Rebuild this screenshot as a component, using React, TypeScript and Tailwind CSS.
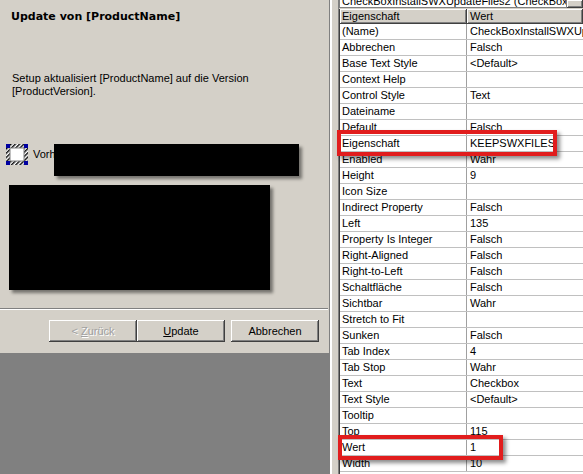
import React from 'react'

const rows: [string, string][] = [
  ['(Name)', 'CheckBoxInstallSWXUpdateFiles2'],
  ['Abbrechen', 'Falsch'],
  ['Base Text Style', '<Default>'],
  ['Context Help', ''],
  ['Control Style', 'Text'],
  ['Dateiname', ''],
  ['Default', 'Falsch'],
  ['Eigenschaft', 'KEEPSWXFILES'],
  ['Enabled', 'Wahr'],
  ['Height', '9'],
  ['Icon Size', ''],
  ['Indirect Property', 'Falsch'],
  ['Left', '135'],
  ['Property Is Integer', 'Falsch'],
  ['Right-Aligned', 'Falsch'],
  ['Right-to-Left', 'Falsch'],
  ['Schaltfläche', 'Falsch'],
  ['Sichtbar', 'Wahr'],
  ['Stretch to Fit', ''],
  ['Sunken', 'Falsch'],
  ['Tab Index', '4'],
  ['Tab Stop', 'Wahr'],
  ['Text', 'Checkbox'],
  ['Text Style', '<Default>'],
  ['Tooltip', ''],
  ['Top', '115'],
  ['Wert', '1'],
  ['Width', '10'],
]

const raised =
  'shadow-[inset_-1px_-1px_#404040,inset_1px_1px_#ffffff,inset_-2px_-2px_#808080,inset_2px_2px_#d4d0c8]'

function SelectedCheckbox() {
  return (
    <svg width="22" height="21" viewBox="0 0 22 21" className="shrink-0">
      <defs>
        <pattern id="hatch" width="3" height="3" patternUnits="userSpaceOnUse" patternTransform="rotate(45)">
          <rect width="3" height="3" fill="#ffffff" />
          <rect width="1.4" height="3" fill="#000000" />
        </pattern>
      </defs>
      <rect x="0" y="0" width="22" height="21" fill="url(#hatch)" />
      <rect x="4" y="4" width="14" height="13" fill="#ffffff" stroke="#808080" strokeWidth="1" />
      <rect x="0" y="0" width="4" height="4" fill="#0000a0" />
      <rect x="18" y="0" width="4" height="4" fill="#0000a0" />
      <rect x="0" y="17" width="4" height="4" fill="#0000a0" />
      <rect x="18" y="17" width="4" height="4" fill="#0000a0" />
    </svg>
  )
}

function Button({ children, disabled }: { children: React.ReactNode; disabled?: boolean }) {
  return (
    <div
      className={`w-[88px] h-[22px] flex items-center justify-center bg-[#d4d0c8] ${raised} ${
        disabled ? 'text-[#a0a0a0]' : 'text-black'
      }`}
    >
      {children}
    </div>
  )
}

export default function App() {
  return (
    <div
      className="relative w-[583px] h-[474px] flex overflow-hidden bg-[#d4d0c8] text-[11px] text-black"
      style={{ fontFamily: '"Liberation Sans", Arial, sans-serif' }}
    >
      {/* dialog preview */}
      <div className="w-[330px] shrink-0 flex flex-col border-r border-[#808080]">
        <div className="relative h-[353px] flex flex-col bg-[#d4d0c8]">
          <div
            className="pl-[11px] pt-[10px] font-bold text-[11px] leading-[14px]"
            style={{ fontFamily: '"DejaVu Sans", Verdana, sans-serif' }}
          >
            Update von [ProductName]
          </div>
          <div className="pl-[12px] pt-[48px] leading-[13px]">
            Setup aktualisiert [ProductName] auf die Version
            <br />
            [ProductVersion].
          </div>
          <div className="flex items-center gap-[5px] pl-[6px] pt-[46px]">
            <SelectedCheckbox />
            <span>Vorh</span>
          </div>
          <div className="absolute left-[54px] top-[144px] w-[245px] h-[32px] bg-black shadow-[3px_3px_3px_rgba(0,0,0,0.45)]" />
          <div className="absolute left-[9px] top-[185px] w-[261px] h-[105px] bg-black shadow-[3px_3px_3px_rgba(0,0,0,0.45)]" />
          <div className="mt-auto">
            <div className="h-[2px] border-t border-[#808080] border-b border-b-white mr-[1px]" />
            <div className="flex items-center pl-[49px] pt-[10px] pb-[11px]">
              <Button disabled>
                <span className="[text-shadow:1px_1px_0_#ffffff]">
                  &lt; <span className="underline">Z</span>urück
                </span>
              </Button>
              <Button>
                <span>
                  <span className="underline">U</span>pdate
                </span>
              </Button>
              <div className="w-[6px]" />
              <Button>Abbrechen</Button>
            </div>
          </div>
        </div>
        <div className="flex-1 bg-[#808080]" />
      </div>

      {/* splitter */}
      <div className="w-[9px] shrink-0 flex bg-[#d4d0c8]">
        <div className="w-[2px] bg-white" />
        <div className="flex-1" />
        <div className="w-[1px] bg-[#808080]" />
      </div>

      {/* property grid */}
      <div className="flex-1 min-w-0 flex flex-col bg-[#d4d0c8]">
        <div className="h-[8px] flex">
          <div className="flex-1 min-w-0 bg-white border border-t-0 border-[#808080] overflow-hidden relative">
            <div className="absolute left-[2px] top-[-5px] whitespace-nowrap leading-[13px]">
              CheckBoxInstallSWXUpdateFiles2 (CheckBox)
            </div>
          </div>
          <div className={`w-[16px] shrink-0 bg-[#d4d0c8] ${raised}`} />
        </div>
        <div className="h-[1px]" />
        <div className="flex-1 flex flex-col bg-white border-l border-[#404040]">
          <div className="flex h-[15px] leading-[15px]">
            <div className={`w-[127px] shrink-0 pl-[2px] bg-[#d4d0c8] ${raised}`}>Eigenschaft</div>
            <div className={`flex-1 pl-[3px] bg-[#d4d0c8] ${raised}`}>Wert</div>
          </div>
          {rows.map(([k, v]) => (
            <div key={k} className="flex h-[16px] leading-[15px] border-b border-[#c0c0c0]">
              <div className="w-[127px] shrink-0 pl-[2px] border-r border-[#a0a0a0] whitespace-nowrap overflow-hidden">
                {k}
              </div>
              <div className="flex-1 min-w-0 pl-[3px] whitespace-nowrap overflow-hidden">{v}</div>
            </div>
          ))}
        </div>
      </div>

      {/* annotations */}
      <div className="absolute left-[337px] top-[130px] w-[220px] h-[26px] border-[4px] border-[#e11d1d] shadow-[3px_3px_4px_rgba(0,0,0,0.45)]" />
      <div className="absolute left-[338px] top-[435px] w-[165px] h-[25px] border-[4px] border-[#e11d1d] shadow-[3px_3px_4px_rgba(0,0,0,0.45)]" />
    </div>
  )
}
